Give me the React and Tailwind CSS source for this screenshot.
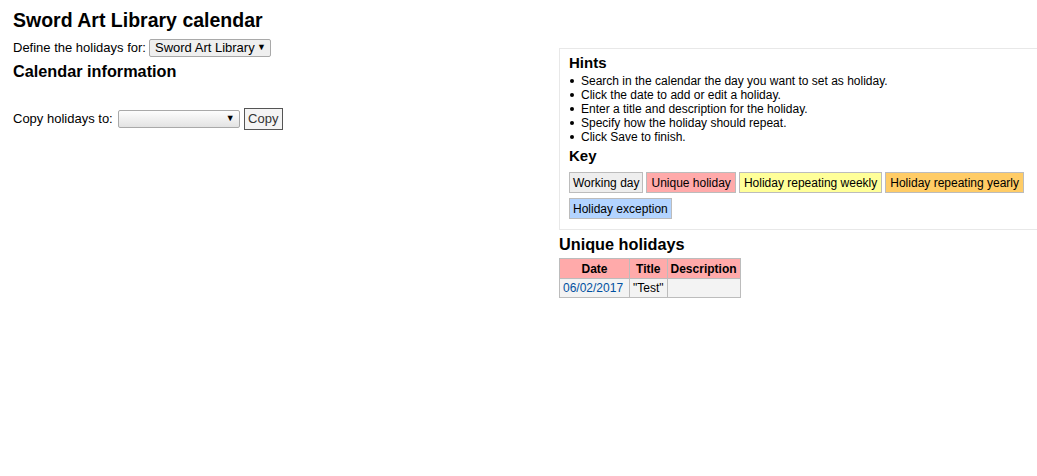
export default function App() {
  const keys = [
    { label: "Working day", cls: "bg-[#eeeeee] px-[3px]" },
    { label: "Unique holiday", cls: "bg-[#ffaaaa] px-[4px]" },
    { label: "Holiday repeating weekly", cls: "bg-[#ffff99] px-[4px]" },
    { label: "Holiday repeating yearly", cls: "bg-[#ffcc66] px-[4px]" },
    { label: "Holiday exception", cls: "bg-[#b3d4ff] px-[3px]" },
  ];
  const hints = [
    "Search in the calendar the day you want to set as holiday.",
    "Click the date to add or edit a holiday.",
    "Enter a title and description for the holiday.",
    "Specify how the holiday should repeat.",
    "Click Save to finish.",
  ];

  return (
    <div className="w-[1037px] h-[476px] overflow-hidden bg-white text-black font-['Liberation_Sans',Arial,sans-serif] text-[12px]">
      <div className="flex">
        {/* Left column */}
        <div className="w-[559px] shrink-0 pl-[13px] pt-[9px] text-[13px]">
          <h1 className="text-[19.5px] font-bold leading-[22px]">Sword Art Library calendar</h1>
          <div className="flex items-center mt-[8px] h-[18px]">
            <span>Define the holidays for:</span>
            <div className="ml-[3px] h-[18px] w-[122px] flex items-center justify-between pl-[5px] pr-[4px] border border-[#a9a9a9] bg-[#efefef] rounded-[2px] whitespace-nowrap text-[13px]">
              <span>Sword Art Library</span>
              <span className="text-[9px]">▼</span>
            </div>
          </div>
          <h2 className="mt-[4px] text-[16.25px] font-bold leading-[20px]">Calendar information</h2>
          <div className="flex items-center mt-[27px]">
            <span>Copy holidays to:</span>
            <div className="ml-[5px] h-[18px] w-[122px] flex items-center justify-end pr-[4px] border border-[#a9a9a9] bg-gradient-to-b from-[#fdfdfd] to-[#e3e3e3] rounded-[2px]">
              <span className="text-[9px]">▼</span>
            </div>
            <div className="ml-[4px] h-[22px] w-[39px] flex items-center justify-center border border-[#555] bg-[#f4f4f4] text-[13px] text-[#333]">
              Copy
            </div>
          </div>
        </div>

        {/* Right column */}
        <div className="w-[500px] shrink-0 pt-[48px]">
          <div className="border-t border-l border-b border-[#e8e8e8] pl-[9px] pt-[6px] pb-[10px]">
            <h3 className="text-[15px] font-bold leading-[16px]">Hints</h3>
            <ul className="mt-[3px]">
              {hints.map((h) => (
                <li key={h} className="flex items-center leading-[14px]">
                  <span className="w-[12px] shrink-0 flex items-center pl-[1px]">
                    <span className="w-[4px] h-[4px] rounded-full bg-black" />
                  </span>
                  <span>{h}</span>
                </li>
              ))}
            </ul>
            <h3 className="mt-[4px] text-[15px] font-bold leading-[16px]">Key</h3>
            <div className="mt-[8px] flex flex-wrap gap-x-[3px] gap-y-[5px] w-[470px]">
              {keys.map((k) => (
                <span
                  key={k.label}
                  className={`${k.cls} border border-[#bcbcbc] h-[21px] flex items-center`}
                >
                  {k.label}
                </span>
              ))}
            </div>
          </div>
          <h2 className="mt-[4px] text-[16.25px] font-bold leading-[20px]">Unique holidays</h2>
          <table className="mt-[4px] border-collapse border border-[#bcbcbc]">
            <thead>
              <tr className="bg-[#ffaaaa]">
                <th className="border border-[#bcbcbc] h-[20px] px-[4px] w-[70px] font-bold">Date</th>
                <th className="border border-[#bcbcbc] px-[4px] font-bold">Title</th>
                <th className="border border-[#bcbcbc] px-[3px] font-bold">Description</th>
              </tr>
            </thead>
            <tbody>
              <tr className="bg-[#f3f3f3]">
                <td className="border border-[#bcbcbc] h-[19px] px-[3px] text-[#0050a0]">06/02/2017</td>
                <td className="border border-[#bcbcbc] px-[3px]">"Test"</td>
                <td className="border border-[#bcbcbc] px-[3px]"></td>
              </tr>
            </tbody>
          </table>
        </div>
      </div>
    </div>
  );
}
